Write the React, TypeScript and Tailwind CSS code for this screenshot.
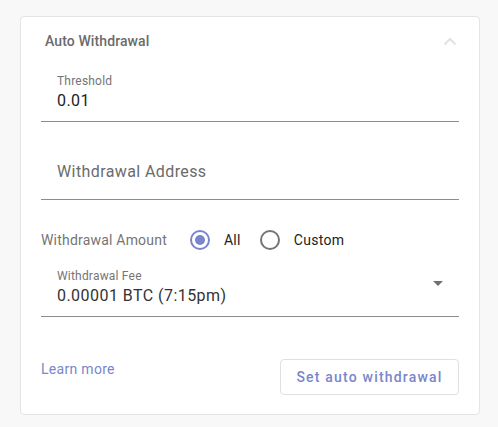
export default function App() {
  return (
    <div className="min-h-[427px] bg-[#f8f8f8] px-5 pt-4 font-['Roboto',sans-serif]">
      <div className="w-[460px] rounded border border-[#e4e4e4] bg-white pb-[19px]">
        <div className="flex h-12 items-center justify-between pl-6 pr-[21px]">
          <span className="text-sm font-medium tracking-[0.1px] text-[#6b6b6b]">Auto Withdrawal</span>
          <svg width="14" height="9" viewBox="0 0 14 9" className="mr-[1px]">
            <path d="M1.5 7.5 L7 2 L12.5 7.5" fill="none" stroke="#e3e3e3" strokeWidth="2" />
          </svg>
        </div>
        <div className="px-5">
          <div className="border-b border-[#8c8c8c] px-4 pt-2 pb-2">
            <div className="text-xs leading-4 tracking-[0.2px] text-[#757575]">Threshold</div>
            <div className="text-base leading-6 tracking-[0.4px] text-[#222]">0.01</div>
          </div>
          <div className="flex h-[78px] items-end border-b border-[#8c8c8c] px-4 pb-[15px]">
            <span className="text-base leading-6 tracking-[0.4px] text-[#6b6b6b]">Withdrawal Address</span>
          </div>
          <div className="mt-[21px] flex h-[38px] items-center">
            <span className="text-sm tracking-[0.2px] text-[#757575]">Withdrawal Amount</span>
            <div className="ml-[23px] flex items-center">
              <svg width="20" height="20" viewBox="0 0 20 20">
                <circle cx="10" cy="10" r="9" fill="none" stroke="#7986cb" strokeWidth="2" />
                <circle cx="10" cy="10" r="5" fill="#7986cb" />
              </svg>
              <span className="ml-[14px] text-sm tracking-[0.3px] text-[#222]">All</span>
            </div>
            <div className="ml-[19px] flex items-center">
              <svg width="20" height="20" viewBox="0 0 20 20">
                <circle cx="10" cy="10" r="9" fill="none" stroke="#757575" strokeWidth="2" />
              </svg>
              <span className="ml-[14px] text-sm tracking-[0.3px] text-[#222]">Custom</span>
            </div>
          </div>
          <div className="mt-[9px] flex items-center justify-between border-b border-[#8c8c8c] pl-4 pr-4 pb-2">
            <div>
              <div className="text-xs leading-4 tracking-[0.2px] text-[#757575]">Withdrawal Fee</div>
              <div className="text-base leading-6 tracking-[0.45px] text-[#333]">0.00001 BTC (7:15pm)</div>
            </div>
            <svg width="10" height="5" viewBox="0 0 10 5" className="mb-[10px]">
              <path d="M0 0 L10 0 L5 5 Z" fill="#707070" />
            </svg>
          </div>
          <div className="mt-[42px] flex items-start justify-between">
            <a className="text-sm leading-5 tracking-[0.3px] text-[#7986cb]">Learn more</a>
            <button className="h-[36px] w-[179px] rounded border border-[#e0e0e0] text-sm font-medium tracking-[1.2px] text-[#7986cb]">
              Set auto withdrawal
            </button>
          </div>
        </div>
      </div>
    </div>
  );
}
